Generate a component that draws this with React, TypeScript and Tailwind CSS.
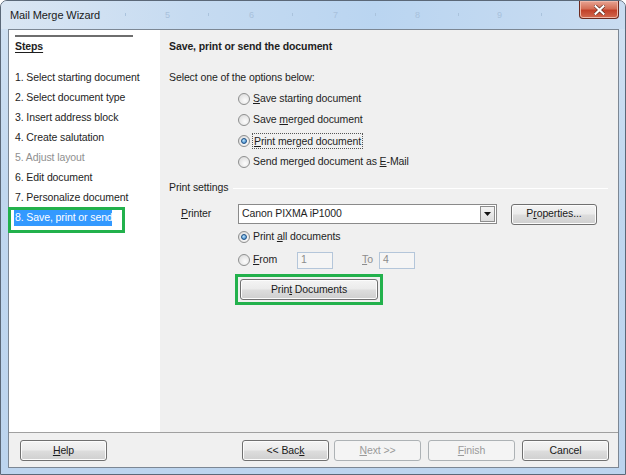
import type { ReactNode } from 'react'

const font = "font-['Liberation_Sans',Arial,sans-serif]"

function Radio({ checked }: { checked?: boolean }) {
  return (
    <span className="flex h-[12px] w-[12px] shrink-0 items-center justify-center rounded-full border border-[#8e8f8f] bg-[radial-gradient(circle_at_60%_65%,#fdfdfd,#d6d6d6)]">
      {checked && (
        <span className="h-[6px] w-[6px] rounded-full border border-[#1c4f84] bg-[radial-gradient(circle_at_40%_35%,#b9e3fb,#2d79c4)]" />
      )}
    </span>
  )
}

function Btn({
  children,
  disabled,
  className = '',
}: {
  children: ReactNode
  disabled?: boolean
  className?: string
}) {
  return (
    <div
      className={
        'flex h-[21px] items-center justify-center whitespace-nowrap rounded-[3px] border ' +
        (disabled
          ? 'border-[#adb2b5] bg-[#f4f4f4] text-[#9a9a9a] '
          : 'border-[#707070] bg-[linear-gradient(#f4f4f4,#ebebeb_48%,#dddddd_52%,#cfcfcf)] text-[#1a1a1a] shadow-[inset_0_0_0_1px_#fcfcfc] ') +
        className
      }
    >
      {children}
    </div>
  )
}

const steps = [
  { label: '1. Select starting document' },
  { label: '2. Select document type' },
  { label: '3. Insert address block' },
  { label: '4. Create salutation' },
  { label: '5. Adjust layout', disabled: true },
  { label: '6. Edit document' },
  { label: '7. Personalize document' },
]

export default function App() {
  return (
    <div className={`relative h-[475px] w-[626px] overflow-hidden rounded-t-[7px] border border-[#5b6878] bg-[linear-gradient(180deg,#d2e2f3,#c0d7ef_40%,#bcd4ee)] text-[10.5px] tracking-[-0.1px] text-[#1e1e1e] ${font}`}>
      {/* Title bar */}
      <div className="relative flex h-[28px] items-center bg-[linear-gradient(90deg,#dae6f3_0%,#c6dbf1_30%,#bad5f1_60%,#c9dcf1_100%)] pl-[9px]">
        <span className="text-[11px] text-[#1b1b1b]">Mail Merge Wizard</span>
        {/* faint ruler showing through the glass */}
        <div className="pointer-events-none absolute inset-0 text-[9px] text-[#a8c1dc]">
          <span className="absolute left-[164px] top-[8px]">5</span>
          <span className="absolute left-[248px] top-[8px]">6</span>
          <span className="absolute left-[332px] top-[8px]">7</span>
          <span className="absolute left-[414px] top-[8px]">8</span>
          <span className="absolute left-[496px] top-[8px]">9</span>
          <span className="absolute left-[124px] top-[12px] h-[3px] w-px bg-[#aac3dd]" />
          <span className="absolute left-[207px] top-[12px] h-[3px] w-px bg-[#aac3dd]" />
          <span className="absolute left-[291px] top-[12px] h-[3px] w-px bg-[#aac3dd]" />
          <span className="absolute left-[374px] top-[12px] h-[3px] w-px bg-[#aac3dd]" />
          <span className="absolute left-[457px] top-[12px] h-[3px] w-px bg-[#aac3dd]" />
          <span className="absolute left-[540px] top-[12px] h-[3px] w-px bg-[#aac3dd]" />
        </div>
        {/* Close button */}
        <div className="absolute right-[6px] top-0 flex h-[18px] w-[40px] items-center justify-center rounded-b-[4px] border border-t-0 border-[#6d2a1f] bg-[linear-gradient(#e8a493,#d46f57_45%,#c2412a_55%,#d2694f)] shadow-[inset_0_0_0_1px_#f0b7a8]">
          <svg width="11" height="10" viewBox="0 0 11 10">
            <path d="M1.5 1.2 L9.5 8.8 M9.5 1.2 L1.5 8.8" stroke="#5a2418" strokeWidth="3.4" strokeLinecap="square" />
            <path d="M1.5 1.2 L9.5 8.8 M9.5 1.2 L1.5 8.8" stroke="#ffffff" strokeWidth="2.2" strokeLinecap="square" />
          </svg>
        </div>
      </div>

      {/* Client area */}
      <div className="ml-[7px] mr-[6px] flex h-[439px] flex-col border border-[#7c8794] bg-[#f0f0f0]">
        <div className="flex flex-1">
          {/* Steps panel */}
          <div className="w-[151px] shrink-0 bg-white pt-[5px]">
            <div className="ml-[6px] h-[2px] w-[118px] bg-[#6e6e6e]" />
            <div className="flex h-[20px] items-center pl-[6px] font-bold underline underline-offset-2">Steps</div>
            <div className="mt-[11px]">
              {steps.map((s) => (
                <div
                  key={s.label}
                  className={'flex h-[20px] items-center whitespace-nowrap pl-[6px] ' + (s.disabled ? 'text-[#8f8f8f]' : '')}
                >
                  {s.label}
                </div>
              ))}
              <div className="relative flex h-[20px] items-center">
                <div className="ml-[5px] flex h-[16px] w-[98px] items-center whitespace-nowrap bg-[#3399ff] pl-[1px] text-white">
                  8. Save, print or send
                </div>
                <div className="absolute -left-[1px] -top-[1px] h-[26px] w-[117px] border-[3px] border-[#22b14c]" />
              </div>
            </div>
          </div>

          {/* Content */}
          <div className="flex-1 pt-[7px]">
            <div className="flex h-[20px] items-center pl-[9px] font-bold">Save, print or send the document</div>
            <div className="mt-[11px] flex h-[20px] items-center pl-[9px]">Select one of the options below:</div>
            <div className="pl-[78px]">
              <div className="flex h-[21px] items-center gap-[3px]">
                <Radio />
                <span><u>S</u>ave starting document</span>
              </div>
              <div className="flex h-[21px] items-center gap-[3px]">
                <Radio />
                <span>Save <u>m</u>erged document</span>
              </div>
              <div className="flex h-[21px] items-center gap-[2px]">
                <Radio checked />
                <span className="border border-dotted border-[#555] px-[1px] leading-[14px]"><u>P</u>rint merged document</span>
              </div>
              <div className="flex h-[21px] items-center gap-[3px]">
                <Radio />
                <span>Send merged document as <u>E</u>-Mail</span>
              </div>
            </div>

            <div className="mt-[6px] flex h-[20px] items-center pl-[9px] pr-[10px]">
              <span>Print settings</span>
              <div className="ml-[5px] h-px flex-1 border-b border-white bg-[#a0a0a0]" />
            </div>

            <div className="mt-[6px] flex h-[20px] items-center pl-[21px]">
              <span className="w-[57px]"><u>P</u>rinter</span>
              <div className="flex h-[20px] w-[259px] items-center justify-between border border-[#8a8a8a] bg-white pl-[3px] pr-[1px]">
                <span>Canon PIXMA iP1000</span>
                <div className="flex h-[16px] w-[15px] items-center justify-center border border-[#8d8d8d] bg-[linear-gradient(#f4f4f4,#dcdcdc)]">
                  <svg width="7" height="4" viewBox="0 0 7 4">
                    <path d="M0 0 H7 L3.5 4 Z" fill="#111" />
                  </svg>
                </div>
              </div>
              <Btn className="ml-[14px] w-[86px]">
                <span>P<u>r</u>operties...</span>
              </Btn>
            </div>

            <div className="mt-[3px] flex h-[20px] items-center gap-[3px] pl-[78px]">
              <Radio checked />
              <span>Print <u>a</u>ll documents</span>
            </div>

            <div className="mt-[3px] flex h-[20px] items-center pl-[78px]">
              <Radio />
              <span className="ml-[3px] w-[44px]"><u>F</u>rom</span>
              <div className="flex h-[17px] w-[36px] items-center border border-[#b4c6da] bg-[#f5f5f5] pl-[3px] text-[#8c8c8c]">1</div>
              <span className="ml-[29px] w-[17px] text-[#8c8c8c]"><u>T</u>o</span>
              <div className="flex h-[17px] w-[36px] items-center border border-[#b4c6da] bg-[#f5f5f5] pl-[3px] text-[#8c8c8c]">4</div>
            </div>

            <div className="ml-[75px] mt-[4px] w-[148px] border-[3px] border-[#22b14c] p-[2px]">
              <Btn>
                <span>Prin<u>t</u> Documents</span>
              </Btn>
            </div>
          </div>
        </div>

        {/* Button bar */}
        <div className="flex h-[35px] shrink-0 items-start border-t border-[#a0a0a0] pr-[9px] pt-[7px]">
          <Btn className="ml-[11px] w-[87px]">
            <span><u>H</u>elp</span>
          </Btn>
          <div className="flex-1" />
          <Btn className="w-[87px]">
            <span>&lt;&lt; Bac<u>k</u></span>
          </Btn>
          <Btn disabled className="ml-[5px] w-[87px]">
            <span><u>N</u>ext &gt;&gt;</span>
          </Btn>
          <Btn disabled className="ml-[7px] w-[87px]">
            <span><u>F</u>inish</span>
          </Btn>
          <Btn className="ml-[7px] w-[87px]">
            <span>Cancel</span>
          </Btn>
        </div>
      </div>
    </div>
  )
}
